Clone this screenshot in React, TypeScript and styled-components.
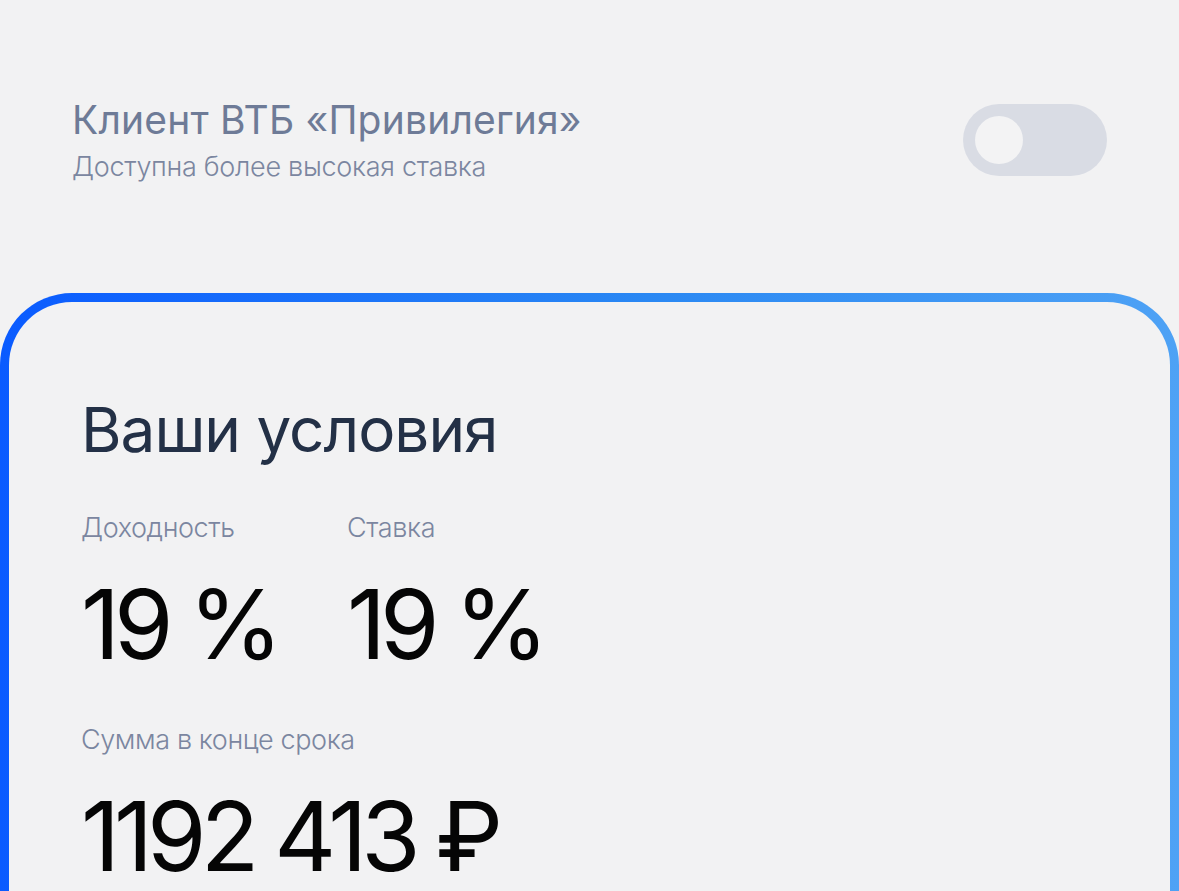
import React, { useState } from 'react';
import styled, { createGlobalStyle } from 'styled-components';

const GlobalStyle = createGlobalStyle`
  html, body {
    margin: 0;
    padding: 0;
    background: #f2f2f3;
    font-family: Inter, "Noto Sans", sans-serif;
    overflow: hidden;
  }
`;

const Page = styled.div`
  width: 1179px;
  height: 891px;
  overflow: hidden;
  background: #f2f2f3;
`;

const OptionRow = styled.div`
  display: flex;
  align-items: center;
  justify-content: space-between;
  padding: 92px 72px 0 72px;
  height: 201px;
  box-sizing: border-box;
`;

const OptionText = styled.div`
  display: flex;
  flex-direction: column;
  margin-top: -14px;
`;

const OptionTitle = styled.div`
  font-size: 39px;
  line-height: 50px;
  font-weight: 400;
  color: #6e7b97;
  letter-spacing: 0.2px;
`;

const OptionHint = styled.div`
  font-size: 27px;
  line-height: 36px;
  font-weight: 300;
  color: #7b86a0;
  letter-spacing: -0.3px;
  margin-top: 4px;
`;

interface ToggleProps {
  on: boolean;
}

const Toggle = styled.button<ToggleProps>`
  width: 144px;
  height: 72px;
  border-radius: 36px;
  border: none;
  padding: 0 12px;
  display: flex;
  align-items: center;
  justify-content: ${({ on }) => (on ? 'flex-end' : 'flex-start')};
  background: ${({ on }) => (on ? '#0a5cff' : '#d9dce4')};
  cursor: pointer;
  margin-top: -14px;
`;

const Knob = styled.span`
  width: 48px;
  height: 48px;
  border-radius: 50%;
  background: #f3f3f4;
`;

const CardFrame = styled.div`
  margin-top: 92px;
  padding: 9px;
  border-radius: 72px 72px 0 0;
  background: linear-gradient(90deg, #0a5bff 0%, #2a88f3 55%, #4ea2f5 100%);
  height: 700px;
`;

const Card = styled.div`
  height: 100%;
  background: #f2f2f3;
  border-radius: 63px 63px 0 0;
  padding: 88px 72px 0 72px;
  box-sizing: border-box;
`;

const CardTitle = styled.h2`
  margin: 0;
  font-size: 62px;
  line-height: 80px;
  font-weight: 400;
  color: #233046;
  letter-spacing: -1px;
`;

const Stats = styled.div`
  display: grid;
  grid-template-columns: 266px auto;
  margin-top: 40px;
`;

const Stat = styled.div`
  display: flex;
  flex-direction: column;
`;

const Label = styled.div`
  font-size: 27px;
  line-height: 36px;
  font-weight: 300;
  color: #7b86a0;
  letter-spacing: -0.4px;
`;

const Value = styled.div`
  font-size: 96px;
  line-height: 84px;
  font-weight: 400;
  color: #050505;
  letter-spacing: -6px;
  margin-top: 36px;
`;

const Total = styled(Stat)`
  margin-top: 56px;
`;

export default function App() {
  const [privilege, setPrivilege] = useState(false);

  return (
    <Page>
      <GlobalStyle />
      <OptionRow>
        <OptionText>
          <OptionTitle>Клиент ВТБ «Привилегия»</OptionTitle>
          <OptionHint>Доступна более высокая ставка</OptionHint>
        </OptionText>
        <Toggle on={privilege} onClick={() => setPrivilege(!privilege)}>
          <Knob />
        </Toggle>
      </OptionRow>
      <CardFrame>
        <Card>
          <CardTitle>Ваши условия</CardTitle>
          <Stats>
            <Stat>
              <Label>Доходность</Label>
              <Value>19 %</Value>
            </Stat>
            <Stat>
              <Label>Ставка</Label>
              <Value>19 %</Value>
            </Stat>
          </Stats>
          <Total>
            <Label>Сумма в конце срока</Label>
            <Value>1192 413 ₽</Value>
          </Total>
        </Card>
      </CardFrame>
    </Page>
  );
}
